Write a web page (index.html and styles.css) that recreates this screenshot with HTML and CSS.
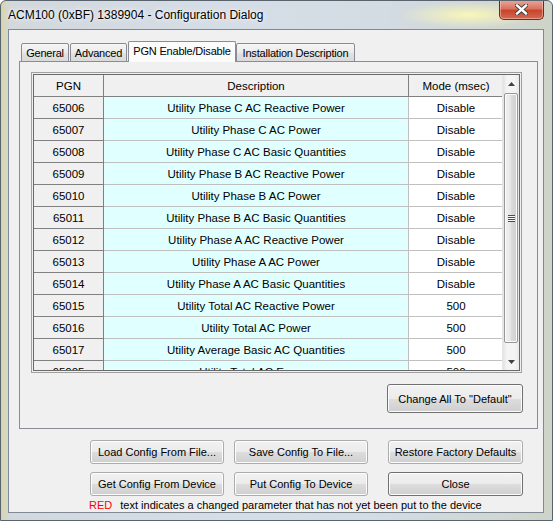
FILE: index.html
```html
<!DOCTYPE html>
<html>
<head>
<meta charset="utf-8">
<title>ACM100 (0xBF) 1389904 - Configuration Dialog</title>
<link rel="stylesheet" href="styles.css">
</head>
<body>
<div class="window">
    <div class="titlebar">
        <span class="title">ACM100 (0xBF) 1389904 - Configuration Dialog</span>
        <div class="close-btn">
            <svg width="13" height="11" viewBox="0 0 13 11">
                <path d="M2 1.5 L11 9.5 M11 1.5 L2 9.5" stroke="#3b3b3b" stroke-width="4.2" stroke-linecap="square"/>
                <path d="M2 1.5 L11 9.5 M11 1.5 L2 9.5" stroke="#ffffff" stroke-width="2.4" stroke-linecap="square"/>
            </svg>
        </div>
    </div>

    <div class="client">
        <div class="tabs">
            <div class="tab tab-general">General</div>
            <div class="tab tab-advanced">Advanced</div>
            <div class="tab tab-pgn selected">PGN Enable/Disable</div>
            <div class="tab tab-install">Installation Description</div>
        </div>

        <div class="tab-page">
            <div class="grid">
                <div class="grid-inner">
                    <div class="rows">
                        <div class="row head">
                            <div class="cell fixed">PGN</div>
                            <div class="cell fixed">Description</div>
                            <div class="cell fixed last">Mode (msec)</div>
                        </div>
                        <div class="row"><div class="cell fixed">65006</div><div class="cell desc">Utility Phase C AC Reactive Power</div><div class="cell mode">Disable</div></div>
                        <div class="row"><div class="cell fixed">65007</div><div class="cell desc">Utility Phase C AC Power</div><div class="cell mode">Disable</div></div>
                        <div class="row"><div class="cell fixed">65008</div><div class="cell desc">Utility Phase C AC Basic Quantities</div><div class="cell mode">Disable</div></div>
                        <div class="row"><div class="cell fixed">65009</div><div class="cell desc">Utility Phase B AC Reactive Power</div><div class="cell mode">Disable</div></div>
                        <div class="row"><div class="cell fixed">65010</div><div class="cell desc">Utility Phase B AC Power</div><div class="cell mode">Disable</div></div>
                        <div class="row"><div class="cell fixed">65011</div><div class="cell desc">Utility Phase B AC Basic Quantities</div><div class="cell mode">Disable</div></div>
                        <div class="row"><div class="cell fixed">65012</div><div class="cell desc">Utility Phase A AC Reactive Power</div><div class="cell mode">Disable</div></div>
                        <div class="row"><div class="cell fixed">65013</div><div class="cell desc">Utility Phase A AC Power</div><div class="cell mode">Disable</div></div>
                        <div class="row"><div class="cell fixed">65014</div><div class="cell desc">Utility Phase A AC Basic Quantities</div><div class="cell mode">Disable</div></div>
                        <div class="row"><div class="cell fixed">65015</div><div class="cell desc">Utility Total AC Reactive Power</div><div class="cell mode">500</div></div>
                        <div class="row"><div class="cell fixed">65016</div><div class="cell desc">Utility Total AC Power</div><div class="cell mode">500</div></div>
                        <div class="row"><div class="cell fixed">65017</div><div class="cell desc">Utility Average Basic AC Quantities</div><div class="cell mode">500</div></div>
                        <div class="row"><div class="cell fixed">65005</div><div class="cell desc">Utility Total AC Energy</div><div class="cell mode">500</div></div>
                    </div>
                    <div class="vscroll">
                        <div class="sb-btn">
                            <svg width="7" height="4" viewBox="0 0 7 4"><polygon points="0,4 3.5,0 7,4" fill="#404040"/></svg>
                        </div>
                        <div class="sb-track">
                            <div class="sb-thumb"><span class="grip"></span></div>
                        </div>
                        <div class="sb-btn">
                            <svg width="7" height="4" viewBox="0 0 7 4"><polygon points="0,0 7,0 3.5,4" fill="#404040"/></svg>
                        </div>
                    </div>
                </div>
            </div>
            <div class="page-actions">
                <button class="btn btn-dark btn-change">Change All To "Default"</button>
            </div>
        </div>

        <div class="actions">
            <button class="btn">Load Config From File...</button>
            <button class="btn">Save Config To File...</button>
            <button class="btn btn-right">Restore Factory Defaults</button>
            <button class="btn">Get Config From Device</button>
            <button class="btn">Put Config To Device</button>
            <button class="btn btn-right btn-dark">Close</button>
        </div>

        <div class="legend"><span class="red">RED</span> text indicates a changed parameter that has not yet been put to the device</div>
    </div>
</div>
</body>
</html>
```

FILE: styles.css
```css
* {
    box-sizing: border-box;
}
body {
    margin: 0;
    font-family: "Liberation Sans", Arial, sans-serif;
    font-size: 12px;
    color: #000;
}

/* window frame */
.window {
    width: 553px;
    height: 521px;
    display: flex;
    flex-direction: column;
    padding: 0 8px 7px 7px;
    border: 1px solid #59636e;
    border-radius: 6px 6px 0 0;
    overflow: hidden;
    background:
        radial-gradient(70px 13px at 468px 14px, rgba(250, 248, 185, 0.95), rgba(250, 248, 185, 0)),
        linear-gradient(to right, #d8d6a8 0px, #d2d8dc 9px, #d5dde6 40%, #d3dbe3 70%, #cfd4c8 100%);
}
.titlebar {
    height: 28px;
    flex-shrink: 0;
    display: flex;
    justify-content: space-between;
    align-items: flex-start;
}
.title {
    margin-top: 7px;
    line-height: 15px;
    text-shadow: 0 0 6px rgba(255, 255, 255, 0.9), 0 0 3px rgba(255, 255, 255, 0.9);
}
.close-btn {
    width: 45px;
    height: 20px;
    margin-top: -1px;
    border: 1px solid #6b2b22;
    border-top: none;
    border-radius: 0 0 5px 5px;
    background: linear-gradient(#e9a99c, #d8745f 45%, #c7452d 55%, #d26a50);
    box-shadow: inset 0 0 0 1px rgba(255, 210, 200, 0.5);
    display: flex;
    align-items: center;
    justify-content: center;
}

/* client area */
.client {
    flex: 1;
    background: #f0f0f0;
    border: 1px solid #7f8a96;
    padding: 11px 5px 0 10px;
    display: flex;
    flex-direction: column;
}
.client > * {
    flex-shrink: 0;
}

/* tabs */
.tabs {
    display: flex;
    align-items: flex-end;
    height: 21px;
    padding-left: 2px;
    margin-bottom: -1px;
    position: relative;
    z-index: 1;
    font-size: 11px;
    letter-spacing: -0.2px;
}
.tab {
    height: 19px;
    margin-right: 1px;
    border: 1px solid #898c95;
    border-radius: 2px 2px 0 0;
    background: linear-gradient(#f6f6f6, #ebebeb 50%, #e2e2e2 50%, #dadada);
    display: flex;
    align-items: center;
    justify-content: center;
    padding-top: 1px;
    white-space: nowrap;
}
.tab.selected {
    height: 21px;
    margin-right: 0;
    border-bottom: none;
    background: #fbfbfb;
    padding-top: 0;
    padding-bottom: 2px;
}
.tab-general { width: 48px; }
.tab-advanced { width: 57px; }
.tab-pgn { width: 108px; }
.tab-install { width: 119px; }

.tab-page {
    height: 368px;
    border: 1px solid #898c95;
    background: #f0f0f0;
    padding: 10px 14px 0 11px;
}

/* grid */
.grid {
    height: 301px;
    margin-right: 1px;
    border: 1px solid #a0a0a0;
    padding: 1px;
}
.grid-inner {
    height: 100%;
    border: 1px solid #696969;
    display: flex;
    overflow: hidden;
    background: #fff;
}
.rows {
    flex: 1;
    overflow: hidden;
    font-size: 11.5px;
}
.row {
    display: grid;
    grid-template-columns: 70px 305px 95px;
    height: 22px;
}
.cell {
    display: flex;
    align-items: center;
    justify-content: center;
    border-right: 1px solid #c0c0c0;
    border-bottom: 1px solid #c0c0c0;
    white-space: nowrap;
}
.cell.fixed {
    background: #f0f0f0;
    border-right-color: #808080;
    border-bottom-color: #808080;
}
.cell.desc {
    background: #e0ffff;
}
.cell.mode {
    background: #fff;
}

/* scrollbar */
.vscroll {
    width: 17px;
    display: flex;
    flex-direction: column;
    background: linear-gradient(to right, #e3e3e3, #f4f4f4 25%, #f4f4f4 75%, #e8e8e8);
    border-left: 1px solid #e6e6e6;
}
.sb-btn {
    height: 17px;
    display: flex;
    align-items: center;
    justify-content: center;
}
.sb-track {
    flex: 1;
    padding: 1px 1px 10px 1px;
}
.sb-thumb {
    height: 250px;
    border: 1px solid #979797;
    border-radius: 2px;
    background: linear-gradient(to right, #f3f3f3, #e6e6e6 45%, #d9d9d9 55%, #d0d0d0);
    box-shadow: inset 0 0 0 1px #fafafa;
    display: flex;
    align-items: center;
    justify-content: center;
}
.grip {
    width: 7px;
    height: 7px;
    background: repeating-linear-gradient(#4d4d4d 0px, #4d4d4d 1px, #f6f6f6 1px, #f6f6f6 2px);
}

/* buttons */
.btn {
    font: inherit;
    font-size: 11px;
    color: #000;
    height: 24px;
    padding: 0;
    border: 1px solid #acacac;
    border-radius: 3px;
    background: linear-gradient(#f2f2f2, #ebebeb 50%, #dddddd 50%, #cfcfcf);
    box-shadow: inset 0 0 0 1px #fcfcfc;
    white-space: nowrap;
}
.btn-dark {
    border-color: #707070;
}
.btn-change {
    width: 136px;
    height: 29px;
}
.page-actions {
    display: flex;
    justify-content: flex-end;
    margin-top: 11px;
}

.actions {
    display: grid;
    grid-template-columns: 134px 134px 145px;
    column-gap: 10px;
    row-gap: 8px;
    margin: 11px 0 0 71px;
}
.btn-right {
    margin-left: 10px;
    width: 135px;
}
.legend {
    margin: 2px 0 0 70px;
    line-height: 14px;
    font-size: 11px;
    white-space: nowrap;
}
.red {
    color: #ff0000;
    margin-right: 5px;
}
```
